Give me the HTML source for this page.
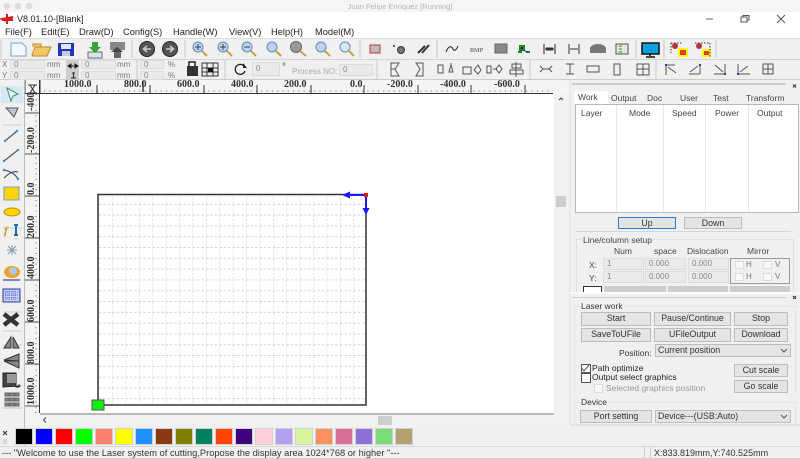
<!DOCTYPE html>
<html><head><meta charset="utf-8"><style>
html,body{margin:0;padding:0;background:#f0f0f0}
#p{position:relative;width:800px;height:459px;overflow:hidden;background:#f0f0f0;font:8px "Liberation Sans",sans-serif;color:#333;filter:blur(.3px)}
#p div,#p span{position:absolute;white-space:nowrap;box-sizing:border-box}
.m{font-size:9.3px;color:#222;top:27px}
.b{background:#e4e4e4;border:1px solid #bdbdbd;text-align:center;color:#333;font-size:8.8px;line-height:11px}
.i{background:#eaeaea;border:1px solid #ddd;color:#888;padding-left:3px;line-height:8px}
.g{color:#777;font-size:8px}
.r{font:bold 10px "Liberation Serif",serif;color:#333}
.rv{font:bold 10px "Liberation Serif",serif;color:#333;transform:rotate(-90deg);transform-origin:left top;left:1px}
.t{font-size:8.5px;color:#444}
.c{top:428px;width:18px;height:17px;border:1px solid #d0d0d0}
svg{position:absolute;left:0;top:0}
</style></head><body><div id="p">
<div style="left:0;top:0;width:800px;height:12px;background:#f6f4f6"></div>
<div style="left:0;top:12px;width:800px;height:26px;background:#fff"></div>
<span style="left:0;width:800px;text-align:center;top:2px;color:#b5b5b5;font-size:7.5px">Juan Felipe Enriquez [Running]</span>
<span style="left:17px;top:14px;font-size:9px;color:#222">V8.01.10-[Blank]</span>
<span class="m" style="left:5px">File(F)</span><span class="m" style="left:41px">Edit(E)</span><span class="m" style="left:79px">Draw(D)</span><span class="m" style="left:123px">Config(S)</span><span class="m" style="left:173px">Handle(W)</span><span class="m" style="left:229px">View(V)</span><span class="m" style="left:271px">Help(H)</span><span class="m" style="left:315px">Model(M)</span>

<div style="left:0;top:38px;width:800px;height:1px;background:#ddd"></div>
<div style="left:0;top:59px;width:800px;height:1px;background:#d5d5d5"></div>
<div style="left:0;top:79px;width:800px;height:1px;background:#ccc"></div>

<span class="g" style="left:2px;top:60px">X</span><span class="g" style="left:2px;top:71px">Y</span>
<div class="i" style="left:10px;top:60px;width:35px;height:9px">0</div><div class="i" style="left:10px;top:71px;width:35px;height:9px">0</div>
<span class="g" style="left:47px;top:60px">mm</span><span class="g" style="left:47px;top:71px">mm</span>
<div style="left:66px;top:60px;width:13px;height:19px;background:#ccc"></div>
<div class="i" style="left:81px;top:60px;width:35px;height:9px">0</div><div class="i" style="left:81px;top:71px;width:35px;height:9px">0</div>
<span class="g" style="left:117px;top:60px">mm</span><span class="g" style="left:117px;top:71px">mm</span>
<div class="i" style="left:140px;top:60px;width:24px;height:9px">0</div><div class="i" style="left:140px;top:71px;width:24px;height:9px">0</div>
<span class="g" style="left:168px;top:60px">%</span><span class="g" style="left:168px;top:71px">%</span>
<div class="i" style="left:252px;top:62px;width:28px;height:14px;line-height:12px">0</div>
<span style="left:282px;top:62px;font-size:10px;color:#444">°</span>
<span style="left:292px;top:67px;color:#aaa;font-size:8px">Process NO:</span>
<div class="i" style="left:339px;top:64px;width:34px;height:12px;line-height:10px">0</div>

<!-- rulers -->
<div style="left:25px;top:80px;width:545px;height:14px;background:#f4f4f4"></div>
<div style="left:25px;top:94px;width:15px;height:331px;background:#f4f4f4;overflow:hidden">
<span class="rv" style="top:17px">-400.0</span><span class="rv" style="top:59px">-200.0</span><span class="rv" style="top:101px">0.0</span><span class="rv" style="top:144px">200.0</span><span class="rv" style="top:185px">400.0</span><span class="rv" style="top:228px">600.0</span><span class="rv" style="top:270px">800.0</span><span class="rv" style="top:311px">1000.0</span>
</div>
<span class="r" style="left:64px;top:79px">1000.0</span><span class="r" style="left:124px;top:79px">800.0</span><span class="r" style="left:177px;top:79px">600.0</span><span class="r" style="left:231px;top:79px">400.0</span><span class="r" style="left:284px;top:79px">200.0</span><span class="r" style="left:350px;top:79px">0.0</span><span class="r" style="left:387px;top:79px">-200.0</span><span class="r" style="left:440px;top:79px">-400.0</span><span class="r" style="left:494px;top:79px">-600.0</span>

<!-- canvas -->
<div style="left:40px;top:94px;width:514px;height:320px;background:#fff"></div>
<div style="left:40px;top:413px;width:514px;height:2px;background:#b8b8b8"></div>
<div style="left:40px;top:415px;width:514px;height:10px;background:#f1f1f1"></div>
<div style="left:378px;top:416px;width:14px;height:9px;background:#cdcdcd"></div>
<div style="left:554px;top:94px;width:14px;height:331px;background:#f1f1f1"></div>
<div style="left:556px;top:196px;width:10px;height:11px;background:#cdcdcd"></div>

<svg width="800" height="459" viewBox="0 0 800 459">
<defs>
<pattern id="gr" x="98.8" y="194" width="13.4" height="10.8" patternUnits="userSpaceOnUse">
<path d="M0 0V10.8" stroke="#cfcfc4" stroke-width="1.1" stroke-dasharray="2 1.6"/>
<path d="M0 10.3H13.4" stroke="#d4d4cc" stroke-width="1" stroke-dasharray="2.4 2"/>
</pattern>
</defs>
<!-- traffic lights -->
<circle cx="7" cy="6" r="3.3" fill="#dcdcdc"/><circle cx="18" cy="6" r="3.3" fill="#dcdcdc"/><circle cx="29" cy="6" r="3.3" fill="#dcdcdc"/>
<!-- app logo -->
<path d="M2 19L13 17L7 21ZM7 14V24M2 20H13" stroke="#d81e1e" stroke-width="2" fill="#d81e1e"/>
<!-- window controls -->
<path d="M706 19H713" stroke="#666"/><rect x="741" y="17" width="6" height="5" fill="none" stroke="#555"/><path d="M743 17V15.500H749V20H747" fill="none" stroke="#555"/><path d="M777 15L785 23M785 15L777 23" stroke="#555"/>
<!-- separators -->
<g stroke="#c8c8c8"><path d="M1 40V58M132 40V58M185 40V58M360 40V58M437 40V58M636 40V58M664 40V58M716 40V58M137 60V79M225 60V79M377 60V79M530 60V79M656 60V79"/></g>
<!-- file icons -->
<path d="M11 43H22L26 47V56H11Z" fill="#f4f9ff" stroke="#6fa5d6"/>
<path d="M32 55L35 47H51L47 56H33ZM33 47V44H41V47" fill="#f2c766" stroke="#b88a2a"/>
<path d="M58 43H74V56H58Z" fill="#2436b8"/><rect x="61" y="44" width="10" height="5" fill="#dfe6ff"/><rect x="62" y="51" width="8" height="5" fill="#c8ccd8"/>
<path d="M88 52H102V58H88Z" fill="#d9e6f2" stroke="#667"/><path d="M92 42H98V47H101L95 53L89 47H92Z" fill="#35a335"/>
<path d="M110 42H125V50H110Z" fill="#888"/><path d="M114 50H121V58H114Z" fill="#666"/><path d="M117 47L123 52H111Z" fill="#444"/>
<circle cx="147" cy="49" r="7.500" fill="#555" stroke="#222"/><path d="M151 49H144M147 46L143.500 49L147 52" stroke="#ccc" fill="none" stroke-width="1.500"/>
<circle cx="170" cy="49" r="7.500" fill="#555" stroke="#222"/><path d="M166 49H173M170 46L173.500 49L170 52" stroke="#ccc" fill="none" stroke-width="1.500"/>
<!-- magnifiers -->
<g fill="#bcd2ee" stroke="#6a88b8"><circle cx="198" cy="47" r="5"/><circle cx="223" cy="47" r="5"/><circle cx="247" cy="47" r="5"/><circle cx="272" cy="47" r="5"/><circle cx="321" cy="47" r="5"/><circle cx="345" cy="47" r="5" fill="#d8e6f6"/></g>
<circle cx="296" cy="47" r="5.500" fill="#999" stroke="#666"/>
<g stroke="#c8a040" stroke-width="2"><path d="M202 51L207 56M227 51L232 56M251 51L256 56M276 51L281 56M300 51L306 56M325 51L330 56M349 51L354 56"/></g>
<path d="M195 47H201M198 44V50M220 47H226M223 44V50M244 47H250" stroke="#345" stroke-width="1"/>
<!-- shapes -->
<rect x="370" y="45" width="10" height="8" fill="#bbb" stroke="#c33"/><circle cx="401" cy="50" r="3.500" fill="#777" stroke="#333"/><circle cx="394" cy="46" r="1" fill="#333"/>
<path d="M418 53L425 46M422 53L429 45" stroke="#333" stroke-width="2"/>
<path d="M446 52C449 44 452 47 453 49S456 51 458 46" fill="none" stroke="#222"/>
<text x="470" y="52" font-size="6" font-weight="bold" fill="#777" font-family="Liberation Serif">BMP</text>
<rect x="495" y="44" width="12" height="9" fill="#888" stroke="#666"/>
<path d="M520 46H524V50H520ZM518 52H522M526 52H530" stroke="#191" stroke-width="2"/><path d="M522 50L519 52M522 50L528 52" stroke="#33c"/>
<path d="M544 44V54M555 44V54M545 49H554" stroke="#222"/><rect x="546" y="47.500" width="7" height="3" fill="#333"/>
<path d="M569 44V54M579 44V54M570 49H578" stroke="#333"/>
<path d="M590 53V48Q592 44 598 44T606 48V53Z" fill="#777"/><rect x="616" y="44" width="12" height="10" fill="#e6e6d8" stroke="#555"/><path d="M619 46H622M619 49H622M619 52H622" stroke="#193"/>
<rect x="642" y="43" width="17" height="11" fill="#0aa0e0" stroke="#111" stroke-width="1.500"/><path d="M650 54V56M646 57H655" stroke="#111" stroke-width="1.500"/>
<circle cx="675" cy="46" r="3" fill="#b33"/><rect x="679" y="49" width="8" height="7" fill="#e33" stroke="#ff0" stroke-width="2"/><circle cx="699" cy="46" r="3" fill="#b33"/><rect x="703" y="50" width="7" height="6" fill="#e33" stroke="#ff0" stroke-width="2"/>
<path d="M671 43H682M671 43V53M695 43H710V57" stroke="#232" stroke-dasharray="1.500 1.500" fill="none"/>
<!-- row 2 icons -->
<path d="M70 66H76M68 66L71 64V68ZM78 66L75 64V68ZM72 73H75M73.500 73V78M71 78H76" stroke="#222"/>
<path d="M189 66V62H195V66" fill="none" stroke="#222" stroke-width="1.500"/><rect x="187" y="66" width="11" height="10" fill="#333"/><rect x="202" y="63" width="16" height="13" fill="#eee" stroke="#333"/><path d="M207 63V76M213 63V76M202 68H218M202 72H218" stroke="#333"/><rect x="208" y="68" width="5" height="4" fill="#111"/>
<path d="M244 66A5 5 0 1 0 245 71" fill="none" stroke="#222" stroke-width="1.300"/><path d="M243 63V68H247Z" fill="#222"/>
<g fill="none" stroke="#555"><path d="M391 63H399L395 69L399 76H391ZM391 69H395"/><path d="M416 63H423V76H416L420 69Z"/><path d="M438 65H443V73H438ZM451 63V65M449 72L451 65L453 72Z"/><path d="M463 74H471V67H463ZM478 65L474 70L478 74L481 70Z"/><path d="M487 66H491V73H487ZM493 69H497M499 65L496 69L499 73L502 69Z"/><path d="M516 62V77M512 64H521V68H512ZM510 70H523V74H510Z"/>
<path d="M540 66L543 69L540 72M552 66L549 69L552 72M543 69H549"/><path d="M566 64H574M566 74H574M570 64V74"/><rect x="587" y="66" width="12" height="6"/><rect x="614" y="64" width="6" height="11"/><rect x="637" y="64" width="12" height="11"/><path d="M637 69H649M643 64V75"/><rect x="763" y="64" width="10" height="10"/><path d="M763 69H773M768 64V74"/></g>
<g fill="none" stroke="#555"><path d="M666 75V65H675M668 67L676 73" /><path d="M689 74H700M700 64V74M690 72L698 66"/><path d="M714 74H725V64M715 65L723 72"/><path d="M738 64V74H750M740 72L748 66"/></g>
<g fill="#24c"><rect x="665" y="64" width="2" height="2"/><rect x="699" y="64" width="2" height="2"/><rect x="724" y="73" width="2" height="2"/><rect x="737" y="73" width="2" height="2"/></g>
<!-- ruler strokes -->
<g stroke="#333"><path d="M40 80V94M25 80V94M25 93.500H553M39.500 80V413"/><path d="M97 85V93M150 85V93M204 85V93M257 85V93M311 85V93M364 85V93M418 85V93M471 85V93M525 85V93" /></g>
<path d="M44 91H553" stroke="#666" stroke-dasharray="1 4.300"/>
<path d="M36 94V413" stroke="#666" stroke-dasharray="1 4.300"/>
<path d="M25 113H39M25 154H39M25 196H39M25 238H39M25 280H39M25 322H39M25 364H39M25 406H39" stroke="#555"/>
<path d="M143 81V92" stroke="#222" stroke-width="1.300"/>
<!-- toolbar left -->
<rect x="1" y="86" width="22" height="17" fill="#d6e8f6"/><path d="M7 88L18 94L13 96L11 101Z" fill="#eef" stroke="#2f9a4f"/>
<path d="M6 108H18L14 117L8 110Z" fill="#bcc6e0" stroke="#555"/>
<path d="M3 125H22M3 228H22M3 312H22M3 331H22M3 345H22" stroke="#ccc"/>
<path d="M5 141L17 131M4 161L18 150M4 170Q14 172 18 179M4 178Q12 170 18 172" stroke="#4a5a6a" stroke-width="1.200" fill="none"/>
<g fill="#3a8fd0"><circle cx="5" cy="141" r="1.200"/><circle cx="17" cy="131" r="1.200"/><circle cx="4" cy="161" r="1.200"/><circle cx="18" cy="150" r="1.200"/><circle cx="4" cy="170" r="1.200"/><circle cx="18" cy="179" r="1.200"/></g>
<rect x="4" y="187" width="15" height="13" fill="#ffd400" stroke="#7c9ccc"/>
<ellipse cx="12" cy="212" rx="8" ry="4" fill="#ffd400" stroke="#c09000"/>
<text x="4" y="234" font-size="11" font-weight="bold" font-style="italic" fill="#c89a10" font-family="Liberation Serif">f</text>
<path d="M14 225H18M14 235H18M16 225V235" stroke="#1a70b0" stroke-width="2"/>
<path d="M7 250H17M12 245V255M8 246L16 254M16 246L8 254" stroke="#8a96b0"/>
<ellipse cx="12" cy="272" rx="8" ry="6" fill="#f0a028"/><circle cx="13" cy="271" r="4" fill="#a8c8e8"/><path d="M3 280H20" stroke="#88a" stroke-width="2"/>
<rect x="3" y="289" width="17" height="13" fill="#c8d0f8" stroke="#2838a0"/><path d="M3 292H20M3 295H20M3 298H20M6 289V302M9 289V302M12 289V302M15 289V302" stroke="#5868c8" stroke-dasharray="1 1"/>
<path d="M4 314L18 325M18 314L4 325" stroke="#333" stroke-width="4.500"/>
<path d="M11 337L4 348H11ZM13 337L19 348H13Z" fill="#888" stroke="#333"/>
<path d="M4 360L19 354V361ZM4 361H19V368Z" fill="#888" stroke="#333"/>
<path d="M3 373H16V387H19V385L20 386L3 387Z" fill="#444" stroke="#222"/><rect x="7" y="374" width="9" height="9" fill="#999"/>
<g fill="#888" stroke="#666"><rect x="5" y="393" width="4" height="3"/><rect x="10" y="393" width="4" height="3"/><rect x="15" y="393" width="4" height="3"/><rect x="5" y="398" width="4" height="3"/><rect x="10" y="398" width="4" height="3"/><rect x="15" y="398" width="4" height="3"/><rect x="5" y="403" width="4" height="3"/><rect x="10" y="403" width="4" height="3"/><rect x="15" y="403" width="4" height="3"/></g>
<path d="M3 408H22M24.500 80V446" stroke="#bbb"/>
<!-- ruler corner -->
<path d="M28 85H37M28 93H37M30 85L35 93M35 85L30 93" stroke="#333"/>
<!-- drawing -->
<rect x="98.500" y="194.500" width="267" height="211" fill="url(#gr)"/>
<rect x="98" y="194.500" width="268" height="210.500" fill="none" stroke="#333" stroke-width="1.500"/>
<path d="M348 195H366V210" fill="none" stroke="#1a1aff" stroke-width="2"/>
<path d="M342 195L350 191.500V198.500ZM366 215L362.500 208H369.500Z" fill="#1a1aff"/>
<rect x="364" y="193" width="4" height="4" fill="#f01010"/>
<rect x="92" y="400" width="12" height="10" fill="#10f010" stroke="#555"/>
<!-- scroll arrows -->
<path d="M559 100L561 98L563 100M46 417.500L43.500 420L46 422.500" stroke="#444" fill="none"/>
<!-- palette grip -->
<path d="M3 431L7 435M7 431L3 435" stroke="#333"/><path d="M4 439V444M6 439V444" stroke="#bbb"/>
<!-- panel -->
<path d="M572 84H786" stroke="#ccc" stroke-width="2"/><path d="M793 84.500L796 87.500M796 84.500L793 87.500" stroke="#333"/>
<path d="M570 80V425" stroke="#e2e2e2"/>
<path d="M576 231.500H791" stroke="#d5d5d5"/>
<path d="M570 293H800" stroke="#fff" stroke-width="1.500"/><path d="M572 297.500H786" stroke="#ccc"/><path d="M793 296L796 299M796 296L793 299" stroke="#333"/>
<path d="M570 425H800" stroke="#d5d5d5"/>
<path d="M0 446.500H800" stroke="#d8d8d8"/>
<path d="M0 458.500H800" stroke="#ccc"/>
</svg>

<!-- panel tabs -->
<div style="left:574px;top:91px;width:34px;height:14px;background:#fff"></div>
<span class="t" style="left:578px;top:92px">Work</span><span class="t" style="left:611px;top:93px">Output</span><span class="t" style="left:647px;top:93px">Doc</span><span class="t" style="left:680px;top:93px">User</span><span class="t" style="left:713px;top:93px">Test</span><span class="t" style="left:746px;top:93px">Transform</span>
<div style="left:575px;top:104px;width:224px;height:109px;background:#fff;border:1px solid #b8b8b8"></div>
<div style="left:616px;top:105px;width:1px;height:107px;background:#e8e8e8"></div><div style="left:663px;top:105px;width:1px;height:107px;background:#e8e8e8"></div><div style="left:705px;top:105px;width:1px;height:107px;background:#e8e8e8"></div><div style="left:748px;top:105px;width:1px;height:107px;background:#e8e8e8"></div>
<span class="t" style="left:581px;top:108px">Layer</span><span class="t" style="left:629px;top:108px">Mode</span><span class="t" style="left:672px;top:108px">Speed</span><span class="t" style="left:715px;top:108px">Power</span><span class="t" style="left:757px;top:108px">Output</span>
<div class="b" style="left:618px;top:217px;width:58px;height:12px;border-color:#2a7ed0;line-height:10px">Up</div>
<div class="b" style="left:684px;top:217px;width:58px;height:12px;line-height:10px">Down</div>
<div style="left:576px;top:239px;width:218px;height:54px;border:1px solid #e0e0e0;border-bottom:0"></div>
<span class="t" style="left:582px;top:235px;background:#f0f0f0;padding:0 1px">Line/column setup</span>
<span class="t" style="left:614px;top:246px">Num</span><span class="t" style="left:654px;top:246px">space</span><span class="t" style="left:687px;top:246px">Dislocation</span><span class="t" style="left:747px;top:246px">Mirror</span>
<span class="t" style="left:589px;top:260px">X:</span><span class="t" style="left:589px;top:273px">Y:</span>
<div class="i" style="left:603px;top:258px;width:41px;height:12px;line-height:10px">1</div><div class="i" style="left:645px;top:258px;width:41px;height:12px;line-height:10px">0.000</div><div class="i" style="left:688px;top:258px;width:41px;height:12px;line-height:10px">0.000</div>
<div class="i" style="left:603px;top:271px;width:41px;height:12px;line-height:10px">1</div><div class="i" style="left:645px;top:271px;width:41px;height:12px;line-height:10px">0.000</div><div class="i" style="left:688px;top:271px;width:41px;height:12px;line-height:10px">0.000</div>
<div style="left:730px;top:258px;width:60px;height:26px;border:1px solid #999"></div>
<div style="left:735px;top:261px;width:9px;height:8px;background:#f8f8f8;border:1px solid #ddd"></div><span class="g" style="left:746px;top:260px">H</span><div style="left:763px;top:261px;width:9px;height:8px;background:#f8f8f8;border:1px solid #ddd"></div><span class="g" style="left:775px;top:260px">V</span>
<div style="left:735px;top:273px;width:9px;height:8px;background:#f8f8f8;border:1px solid #ddd"></div><span class="g" style="left:746px;top:272px">H</span><div style="left:763px;top:273px;width:9px;height:8px;background:#f8f8f8;border:1px solid #ddd"></div><span class="g" style="left:775px;top:272px">V</span>
<div style="left:583px;top:286px;width:19px;height:6px;background:#fff;border:1px solid #333;border-bottom:0"></div>
<div style="left:604px;top:286px;width:62px;height:6px;background:#ccc"></div><div style="left:668px;top:286px;width:60px;height:6px;background:#ccc"></div><div style="left:730px;top:286px;width:60px;height:6px;background:#ccc"></div>

<!-- laser work -->
<div style="left:574px;top:306px;width:222px;height:87px;border:1px solid #e4e4e4;border-bottom:0"></div>
<span class="t" style="left:580px;top:301px;background:#f0f0f0;padding:0 1px;color:#333">Laser work</span>
<div class="b" style="left:581px;top:312px;width:70px;height:14px">Start</div><div class="b" style="left:654px;top:312px;width:77px;height:14px">Pause/Continue</div><div class="b" style="left:734px;top:312px;width:54px;height:14px">Stop</div>
<div class="b" style="left:581px;top:328px;width:70px;height:14px">SaveToUFile</div><div class="b" style="left:654px;top:328px;width:77px;height:14px">UFileOutput</div><div class="b" style="left:734px;top:328px;width:54px;height:14px">Download</div>
<span class="t" style="left:619px;top:348px;color:#333">Position:</span>
<div class="b" style="left:655px;top:344px;width:136px;height:13px;text-align:left;padding-left:2px;line-height:11px">Current position</div>
<div style="left:581px;top:364px;width:10px;height:9px;background:#fff;border:1px solid #555"></div>
<span class="t" style="left:592px;top:363px;color:#222">Path optimize</span>
<div style="left:581px;top:373px;width:10px;height:10px;background:#fff;border:1px solid #555"></div>
<span class="t" style="left:592px;top:372px;color:#222">Output select graphics</span>
<div style="left:594px;top:384px;width:9px;height:9px;background:#f8f8f8;border:1px solid #ddd"></div>
<span class="t" style="left:606px;top:383px;color:#999">Selected graphics position</span>
<div class="b" style="left:734px;top:364px;width:54px;height:13px">Cut scale</div><div class="b" style="left:734px;top:380px;width:54px;height:13px">Go scale</div>
<div style="left:574px;top:402px;width:222px;height:23px;border:1px solid #e4e4e4;border-bottom:0"></div>
<span class="t" style="left:580px;top:397px;background:#f0f0f0;padding:0 1px;color:#333">Device</span>
<div class="b" style="left:580px;top:410px;width:72px;height:13px">Port setting</div>
<div class="b" style="left:655px;top:410px;width:136px;height:13px;text-align:left;padding-left:2px">Device---(USB:Auto)</div>
<svg width="800" height="459"><path d="M581.500 368L584 371L589 365M781 349L784 352L787 349M781 415L784 418L787 415" fill="none" stroke="#555"/></svg>

<!-- palette -->
<div class="c" style="left:15px;background:#000"></div><div class="c" style="left:35px;background:#0000ff"></div><div class="c" style="left:55px;background:#ff0000"></div><div class="c" style="left:75px;background:#00ff00"></div><div class="c" style="left:95px;background:#ff8070"></div><div class="c" style="left:115px;background:#ffff00"></div><div class="c" style="left:135px;background:#1e90ff"></div><div class="c" style="left:155px;background:#8b3a10"></div><div class="c" style="left:175px;background:#808000"></div><div class="c" style="left:195px;background:#008060"></div><div class="c" style="left:215px;background:#ff4500"></div><div class="c" style="left:235px;background:#400080"></div><div class="c" style="left:255px;background:#ffd0dc"></div><div class="c" style="left:275px;background:#b4a0f0"></div><div class="c" style="left:295px;background:#d4f59a"></div><div class="c" style="left:315px;background:#ff9060"></div><div class="c" style="left:335px;background:#d87098"></div><div class="c" style="left:355px;background:#8c70d8"></div><div class="c" style="left:375px;background:#78dc78"></div><div class="c" style="left:395px;background:#b4a070"></div>

<!-- status -->
<span style="left:2px;top:448px;font-size:9.3px;color:#333">--- "Welcome to use the Laser system of cutting,Propose the display area 1024*768 or higher "---</span>
<div style="left:644px;top:447px;width:1px;height:12px;background:#ccc"></div><div style="left:650px;top:447px;width:1px;height:12px;background:#ccc"></div>
<span style="left:654px;top:448px;font-size:9px;color:#333">X:833.819mm,Y:740.525mm</span>
</div></body></html>
